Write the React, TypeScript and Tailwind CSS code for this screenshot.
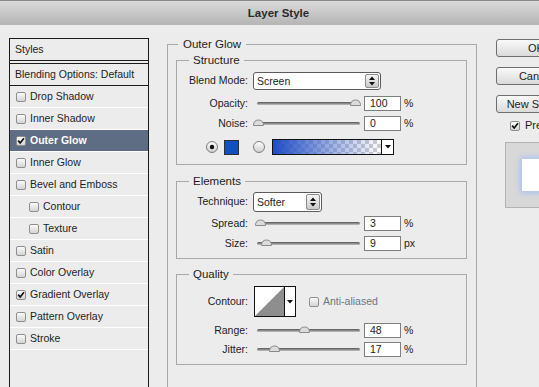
import React from "react";

function CheckBox({ checked }: { checked?: boolean }) {
  return (
    <svg width="10" height="10" viewBox="0 0 10 10" className="shrink-0">
      <defs>
        <linearGradient id="cbfill" x1="0" y1="0" x2="0" y2="1">
          <stop offset="0" stopColor="#fdfdfd" />
          <stop offset="1" stopColor="#d2d2d2" />
        </linearGradient>
      </defs>
      <rect x="0.5" y="0.5" width="9" height="9" rx="1.5" fill="url(#cbfill)" stroke="#8f8f8f" />
      {checked && <path d="M2.2 4.6 L4.2 7 L8 2.2" fill="none" stroke="#111" strokeWidth="1.7" />}
    </svg>
  );
}

function Radio({ on }: { on?: boolean }) {
  return (
    <svg width="12" height="12" viewBox="0 0 12 12" className="shrink-0">
      <defs>
        <linearGradient id="rdfill" x1="0" y1="0" x2="0" y2="1">
          <stop offset="0" stopColor="#ffffff" />
          <stop offset="1" stopColor="#cdcdcd" />
        </linearGradient>
      </defs>
      <circle cx="6" cy="6" r="5.5" fill="url(#rdfill)" stroke="#7d7d7d" />
      {on && <circle cx="6" cy="6" r="2.2" fill="#111" />}
    </svg>
  );
}

function StyleRow({ label, checked, active, indent }: { label: string; checked?: boolean; active?: boolean; indent?: boolean }) {
  return (
    <div
      className={
        "flex h-[22px] items-center gap-[4px] border-b border-white " +
        (indent ? "pl-[19px] " : "pl-[6px] ") +
        (active ? "bg-[#5e6d83] font-bold text-white" : "text-[#1e1e1e]")
      }
    >
      <CheckBox checked={checked} />
      <span>{label}</span>
    </div>
  );
}

function Spinner() {
  return (
    <div className="my-[1px] mr-[1px] flex w-[14px] items-center justify-center rounded-[2px] border border-[#8c8c8c] bg-linear-to-b from-[#f7f7f7] to-[#c9c9c9]">
      <svg width="6" height="10" viewBox="0 0 6 10">
        <path d="M0 4 L3 0.5 L6 4 Z" fill="#111" />
        <path d="M0 6 L3 9.5 L6 6 Z" fill="#111" />
      </svg>
    </div>
  );
}

function Select({ value, width, height }: { value: string; width: string; height: string }) {
  return (
    <div className={"ml-[5px] flex rounded-[3px] border border-[#5c5c5c] bg-white " + width + " " + height}>
      <div className="flex flex-1 items-center pl-[3px] pt-[1px]">{value}</div>
      <Spinner />
    </div>
  );
}

function Slider({ label, value, pos, unit, gap }: { label: string; value: string; pos: number; unit: string; gap: string }) {
  return (
    <div className={"flex h-[15px] items-center " + gap}>
      <div className="w-[71px] text-right">{label}</div>
      <div className="relative ml-[9px] h-[3px] w-[103px] rounded-full bg-linear-to-b from-[#555] to-[#c4c4c4]">
        <svg width="11" height="7" viewBox="0 0 11 7" className="absolute top-[-3px]" style={{ left: pos - 5 }}>
          <path d="M0.5 6.5 Q0.5 1 5.5 1 Q10.5 1 10.5 6.5 Z" fill="#dcdcdc" stroke="#8a8a8a" />
        </svg>
      </div>
      <div className="ml-[4px] flex h-[15px] w-[37px] items-center border border-[#7f7f7f] bg-white pl-[5px] pt-[1px]">{value}</div>
      <div className="ml-[3px]">{unit}</div>
    </div>
  );
}

export default function App() {
  return (
    <div className="flex h-[387px] w-[539px] flex-col overflow-hidden bg-[#ececec] font-['Liberation_Sans',Arial,sans-serif] text-[10.5px] text-[#1c1c1c]">
      {/* title bar */}
      <div className="flex h-[25px] shrink-0 items-center justify-center border-t border-[#8a8a8a] bg-linear-to-b from-[#dadada] to-[#b5b5b5] pl-[18px] pt-[1px] text-[11.5px] font-bold text-[#2a2a2a]">
        Layer Style
      </div>

      <div className="flex items-start">
        {/* styles list */}
        <div className="ml-[9px] mt-[13px] h-[360px] w-[140px] shrink-0 border border-[#1b1b1b]">
          <div className="flex h-[21px] items-center pl-[5px] pt-[1px]">Styles</div>
          <div className="h-[4px] border-y border-[#1b1b1b]" />
          <div className="flex h-[22px] items-center border-b border-[#1b1b1b] pl-[5px]">Blending Options: Default</div>
          <StyleRow label="Drop Shadow" />
          <StyleRow label="Inner Shadow" />
          <StyleRow label="Outer Glow" checked active />
          <StyleRow label="Inner Glow" />
          <StyleRow label="Bevel and Emboss" />
          <StyleRow label="Contour" indent />
          <StyleRow label="Texture" indent />
          <StyleRow label="Satin" />
          <StyleRow label="Color Overlay" />
          <StyleRow label="Gradient Overlay" checked />
          <StyleRow label="Pattern Overlay" />
          <StyleRow label="Stroke" />
        </div>

        {/* settings */}
        <fieldset className="ml-[18px] mt-[12px] h-[400px] w-[310px] shrink-0 border border-[#a9a9a9] pl-[8px] pr-[9px]">
          <legend className="ml-[2px] px-[5px] text-[11.5px] leading-[14px]">Outer Glow</legend>

          <fieldset className="mt-[2px] border border-[#a9a9a9] pb-[9px]">
            <legend className="ml-[12px] px-[4px] text-[11.5px] leading-[14px]">Structure</legend>
            <div className="mt-[5px] flex h-[18px] items-center">
              <div className="w-[71px] text-right">Blend Mode:</div>
              <Select value="Screen" width="w-[128px]" height="h-[18px]" />
            </div>
            <Slider label="Opacity:" value="100" pos={98} unit="%" gap="mt-[6px]" />
            <Slider label="Noise:" value="0" pos={1} unit="%" gap="mt-[5px]" />
            <div className="mt-[8px] flex h-[16px] items-center">
              <div className="ml-[29px]">
                <Radio on />
              </div>
              <div className="ml-[6px] h-[15px] w-[15px] border border-[#303030] bg-[#1150be]" />
              <div className="ml-[14px]">
                <Radio />
              </div>
              <div className="ml-[7px] flex h-[16px] w-[122px] border border-[#111]">
                <div className="flex-1 bg-[conic-gradient(#cfcfcf_25%,#ffffff_0_50%,#cfcfcf_0_75%,#ffffff_0)] bg-[length:8px_8px]">
                  <div className="h-full w-full bg-linear-to-r from-[#1f4cc4] via-[#4d6fd0]/60 to-transparent" />
                </div>
                <div className="flex w-[12px] items-center justify-center border-l border-[#111] bg-white">
                  <svg width="6" height="4" viewBox="0 0 6 4">
                    <path d="M0 0 L6 0 L3 3.5 Z" fill="#111" />
                  </svg>
                </div>
              </div>
            </div>
          </fieldset>

          <fieldset className="mt-[9px] border border-[#a9a9a9] pb-[7px]">
            <legend className="ml-[12px] px-[4px] text-[11.5px] leading-[14px]">Elements</legend>
            <div className="mt-[4px] flex h-[20px] items-center">
              <div className="w-[71px] text-right">Technique:</div>
              <Select value="Softer" width="w-[69px]" height="h-[20px]" />
            </div>
            <Slider label="Spread:" value="3" pos={3} unit="%" gap="mt-[4px]" />
            <Slider label="Size:" value="9" pos={9} unit="px" gap="mt-[5px]" />
          </fieldset>

          <fieldset className="mt-[8px] border border-[#a9a9a9] pb-[7px]">
            <legend className="ml-[12px] px-[4px] text-[11.5px] leading-[14px]">Quality</legend>
            <div className="mt-[5px] flex h-[31px] items-center">
              <div className="w-[71px] text-right">Contour:</div>
              <div className="ml-[6px] flex h-[31px] w-[42px] border border-[#111] bg-white">
                <svg width="29" height="29" viewBox="0 0 29 29" className="shrink-0">
                  <path d="M0 29 L29 0 L29 29 Z" fill="#8e8e8e" />
                </svg>
                <div className="flex flex-1 items-center justify-center border-l border-[#111]">
                  <svg width="6" height="4" viewBox="0 0 6 4">
                    <path d="M0 0 L6 0 L3 3.5 Z" fill="#111" />
                  </svg>
                </div>
              </div>
              <div className="ml-[13px] flex items-center gap-[4px] text-[#6b7686]">
                <CheckBox />
                <span>Anti-aliased</span>
              </div>
            </div>
            <Slider label="Range:" value="48" pos={47} unit="%" gap="mt-[6px]" />
            <Slider label="Jitter:" value="17" pos={17} unit="%" gap="mt-[4px]" />
          </fieldset>
        </fieldset>

        {/* buttons */}
        <div className="ml-[19px] mt-[14px] flex w-[80px] shrink-0 flex-col text-[11px]">
          <div className="flex h-[18px] items-center justify-center rounded-[3px] border border-[#6e6e6e] bg-linear-to-b from-[#fafafa] to-[#dadada]">OK</div>
          <div className="mt-[10px] flex h-[18px] items-center justify-center rounded-[3px] border border-[#6e6e6e] bg-linear-to-b from-[#fafafa] to-[#dadada]">Cancel</div>
          <div className="mt-[10px] flex h-[18px] items-center justify-center rounded-[3px] border border-[#6e6e6e] bg-linear-to-b from-[#fafafa] to-[#dadada]">New Style...</div>
          <div className="mt-[7px] flex h-[11px] items-center gap-[5px] pl-[14px]">
            <CheckBox checked />
            <span>Preview</span>
          </div>
          <div className="ml-[9px] mt-[11px] flex h-[66px] w-[80px] items-center border border-[#b3b3b3] bg-[#d8d8d8] pl-[16px]">
            <div className="h-[32px] w-[40px] bg-white shadow-[0_0_6px_2px_#a9c2f2]" />
          </div>
        </div>
      </div>
    </div>
  );
}
